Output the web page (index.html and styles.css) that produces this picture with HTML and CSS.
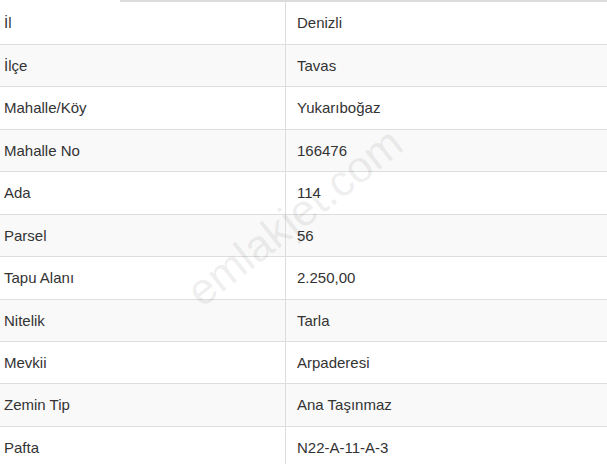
FILE: index.html
```html
<!DOCTYPE html>
<html lang="tr">
<head>
<meta charset="utf-8">
<link rel="stylesheet" href="styles.css">
</head>
<body>
<div class="page">
  <div class="topbar"></div>
  <table class="info">
    <tbody>
      <tr class="first"><td class="label">İl</td><td class="value">Denizli</td></tr>
      <tr><td class="label">İlçe</td><td class="value">Tavas</td></tr>
      <tr><td class="label">Mahalle/Köy</td><td class="value">Yukarıboğaz</td></tr>
      <tr><td class="label">Mahalle No</td><td class="value">166476</td></tr>
      <tr><td class="label">Ada</td><td class="value">114</td></tr>
      <tr><td class="label">Parsel</td><td class="value">56</td></tr>
      <tr><td class="label">Tapu Alanı</td><td class="value">2.250,00</td></tr>
      <tr><td class="label">Nitelik</td><td class="value">Tarla</td></tr>
      <tr><td class="label">Mevkii</td><td class="value">Arpaderesi</td></tr>
      <tr><td class="label">Zemin Tip</td><td class="value">Ana Taşınmaz</td></tr>
      <tr><td class="label">Pafta</td><td class="value">N22-A-11-A-3</td></tr>
    </tbody>
  </table>
  <div class="watermark">emlakjet.com</div>
</div>
</body>
</html>
```

FILE: styles.css
```css
html, body {
  margin: 0;
  padding: 0;
  background: #fff;
}
.page {
  position: relative;
  width: 607px;
  height: 464px;
  overflow: hidden;
  font-family: "Liberation Sans", Arial, sans-serif;
  font-size: 15px;
  color: #333;
}
.topbar {
  margin-left: 120px;
  height: 2px;
  background: #dcdcdc;
}
.info {
  width: 607px;
  border-collapse: collapse;
  table-layout: fixed;
}
.info tr {
  border-top: 1px solid #dddddd;
}
.info tr.first {
  border-top: none;
}
.info tr:nth-child(even) td {
  background: #f9f9f9;
}
.info td {
  padding: 11px 11px;
  line-height: 19.44px;
  vertical-align: middle;
  white-space: nowrap;
}
.info tr.first td {
  padding-top: 11px;
  padding-bottom: 11.56px;
}
.info td.label {
  width: 281px;
  padding-left: 4px;
  padding-right: 0;
  border-right: 1px solid #dddddd;
}
.info td.value {
  padding-left: 11px;
}
.watermark {
  position: absolute;
  left: 165px;
  top: 192px;
  font-size: 44px;
  color: rgba(0, 0, 0, 0.085);
  transform: rotate(-38deg);
  transform-origin: center;
  pointer-events: none;
  white-space: nowrap;
}
```
